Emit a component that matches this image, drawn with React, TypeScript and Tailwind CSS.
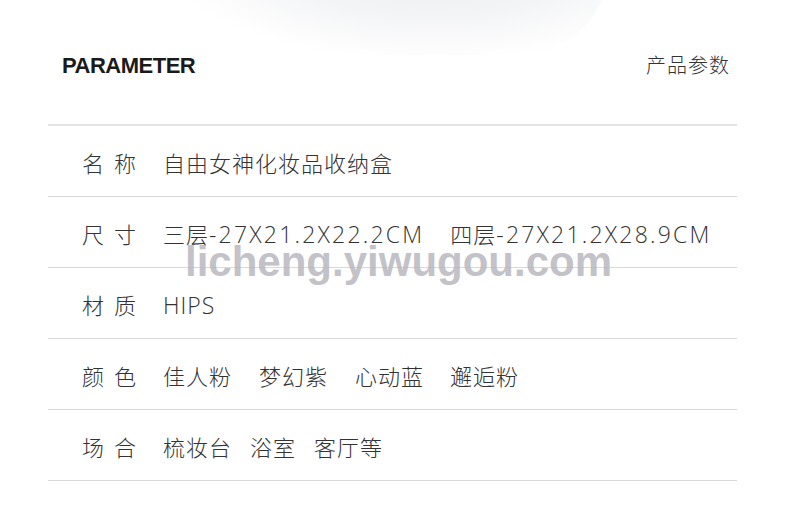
import React from "react";

const L = ({ children }: { children: React.ReactNode }) => (
  <span className="text-[23px] tracking-[2.2px]">{children}</span>
);

const rows: { label: [string, string]; value: React.ReactNode }[] = [
  { label: ["名", "称"], value: "自由女神化妆品收纳盒" },
  {
    label: ["尺", "寸"],
    value: (
      <>
        <span>三层<L>-27X21.2X22.2CM</L></span>
        <span className="ml-[26px]">四层<L>-27X21.2X28.9CM</L></span>
      </>
    ),
  },
  { label: ["材", "质"], value: <span className="text-[23px] tracking-[1px]">HIPS</span> },
  {
    label: ["颜", "色"],
    value: (
      <>
        <span>佳人粉</span>
        <span className="ml-[27px]">梦幻紫</span>
        <span className="ml-[27px]">心动蓝</span>
        <span className="ml-[26px]">邂逅粉</span>
      </>
    ),
  },
  {
    label: ["场", "合"],
    value: (
      <>
        <span>梳妆台</span>
        <span className="ml-[18px]">浴室</span>
        <span className="ml-[18px]">客厅等</span>
      </>
    ),
  },
];

export default function App() {
  return (
    <div
      className="relative w-[800px] h-[516px] overflow-hidden bg-white"
      style={{ fontFamily: '"Open Sans", "Noto Sans CJK SC", sans-serif' }}
    >
      <div className="absolute left-[170px] top-[-130px] w-[440px] h-[185px] rounded-full bg-[radial-gradient(ellipse_at_60%_40%,#e9ebee_0%,#f3f4f6_45%,#ffffff_75%)]" />
      <div className="relative pl-[48px] pr-[63px] pt-[49px]">
        <div className="flex items-center justify-between pl-[14px] pr-[7px] h-[32px]">
          <span
            className="text-[22px] font-bold text-[#1a1a1a] tracking-[-0.5px]"
            style={{ fontFamily: '"Liberation Sans", Arial, sans-serif' }}
          >
            PARAMETER
          </span>
          <span
            className="text-[20px] text-[#333] font-light tracking-[1px]"
            style={{ fontFamily: '"Noto Sans CJK SC", sans-serif' }}
          >
            产品参数
          </span>
        </div>
        <div className="mt-[43px] border-t-2 border-[#e3e3e3]">
          {rows.map((r) => (
            <div
              key={r.label[0]}
              className="flex items-center h-[71px] pt-[4px] border-b border-[#d9d9d9] text-[22px] text-[#333] font-light"
            >
              <span className="w-[115px] pl-[34px] flex gap-[10px]">
                <span>{r.label[0]}</span>
                <span>{r.label[1]}</span>
              </span>
              <span className="tracking-[1px] whitespace-nowrap">{r.value}</span>
            </div>
          ))}
        </div>
      </div>
      <div
        className="absolute left-[185px] top-[241px] text-[42px] font-bold text-[#b4b4bb] opacity-80 leading-none"
        style={{ fontFamily: '"Liberation Sans", Arial, sans-serif' }}
      >
        licheng.yiwugou.com
      </div>
    </div>
  );
}
